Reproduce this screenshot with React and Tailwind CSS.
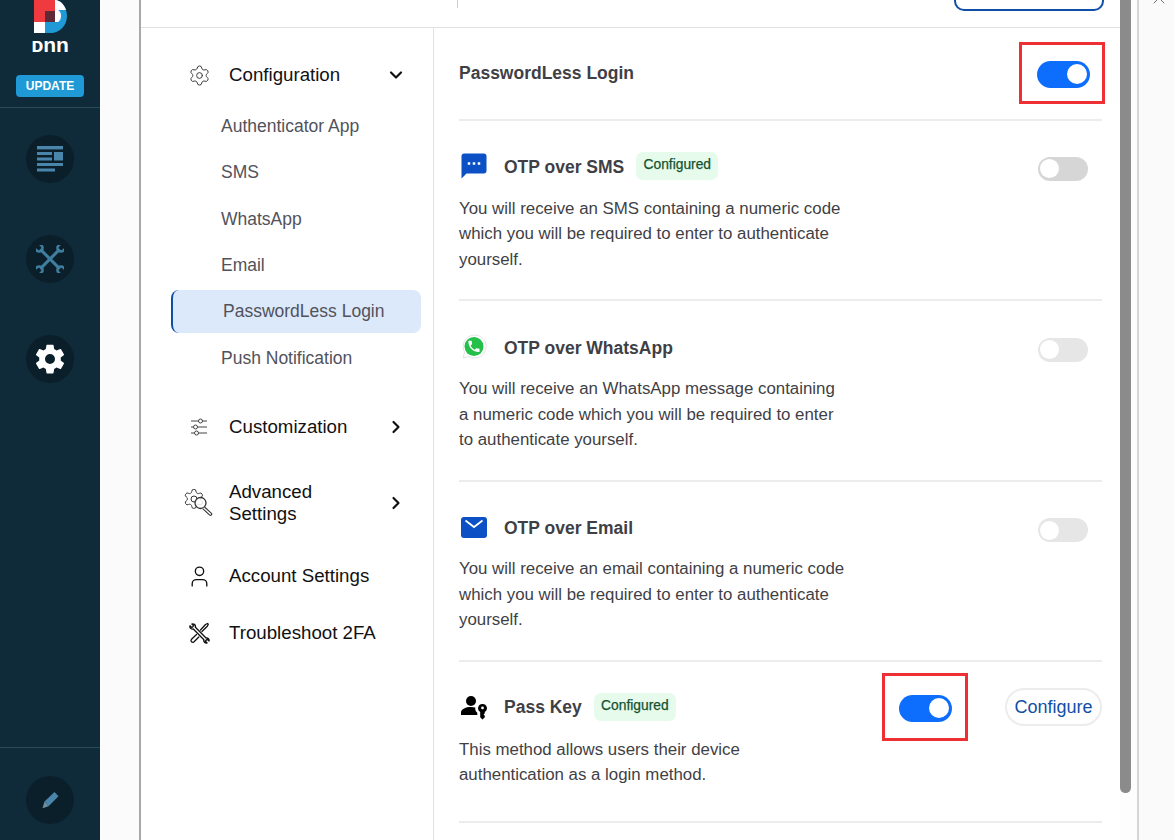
import React from "react";
import { Settings, User, ChevronDown, ChevronRight, X } from "lucide-react";
import { MdSms } from "react-icons/md";
import { IoSettingsSharp } from "react-icons/io5";

const GEAR = "M12.22 2h-.44a2 2 0 0 0-2 2v.18a2 2 0 0 1-1 1.73l-.43.25a2 2 0 0 1-2 0l-.15-.08a2 2 0 0 0-2.73.73l-.22.38a2 2 0 0 0 .73 2.73l.15.1a2 2 0 0 1 1 1.72v.51a2 2 0 0 1-1 1.74l-.15.09a2 2 0 0 0-.73 2.73l.22.38a2 2 0 0 0 2.73.73l.15-.08a2 2 0 0 1 2 0l.43.25a2 2 0 0 1 1 1.73V20a2 2 0 0 0 2 2h.44a2 2 0 0 0 2-2v-.18a2 2 0 0 1 1-1.73l.43-.25a2 2 0 0 1 2 0l.15.08a2 2 0 0 0 2.73-.73l.22-.39a2 2 0 0 0-.73-2.73l-.15-.08a2 2 0 0 1-1-1.74v-.5a2 2 0 0 1 1-1.74l.15-.09a2 2 0 0 0 .73-2.73l-.22-.38a2 2 0 0 0-2.73-.73l-.15.08a2 2 0 0 1-2 0l-.43-.25a2 2 0 0 1-1-1.73V4a2 2 0 0 0-2-2z";

function Logo() {
  const d = "M21 0h1C28 1 33 8 33 16 33 26 25 33 17 33H11V22h10V0z";
  return (
    <svg width="33" height="33" viewBox="0 0 33 33" className="block">
      <defs>
        <clipPath id="logoTop"><rect x="0" y="0" width="33" height="10" /></clipPath>
      </defs>
      <path d={d} fill="#1f9ad6" />
      <path d={d} fill="#ffffff" clipPath="url(#logoTop)" />
      <path d="M21 10h3c2 1 3 3 3 6 0 2-1 5-3 6h-3z" fill="#ffffff" />
      <rect x="0" y="0" width="21" height="22" fill="#ef3b3f" />
      <rect x="11" y="11" width="10" height="11" fill="#5f2a35" />
      <rect x="0" y="22" width="11" height="11" fill="#ffffff" />
    </svg>
  );
}

function DocIcon() {
  return (
    <svg width="28" height="28" viewBox="0 0 28 28" fill="#4a86ab">
      <rect x="1" y="1" width="26" height="3.4" />
      <rect x="1" y="7" width="15" height="3" />
      <rect x="1" y="12.5" width="15" height="3" />
      <rect x="18" y="7" width="9" height="8.5" />
      <rect x="1" y="18" width="26" height="3" />
      <rect x="1" y="23.5" width="18" height="3" />
    </svg>
  );
}

function Wrench({ angle }) {
  return (
    <g transform={`rotate(${angle} 14 14)`}>
      <path d="M14 1.500V26.500" strokeWidth="3" />
      <path d="M10.500-5v3.500a3.500 3.500 0 0 0 7 0V-5" strokeWidth="2.600" />
      <path d="M10.500 33v-3.500a3.500 3.500 0 0 1 7 0V33" strokeWidth="2.600" />
    </g>
  );
}

function Tools() {
  return (
    <svg width="28" height="28" viewBox="0 0 28 28" fill="none" stroke="#3f7e9e" strokeLinecap="round">
      <Wrench angle={45} />
      <Wrench angle={-45} />
    </svg>
  );
}

function Pencil() {
  return (
    <svg width="24" height="24" viewBox="0 0 24 24">
      <path d="M6.500 13.500 16.500 4l4 4.200-10 10z" fill="#4a86ab" />
      <path d="M6.500 13.500 10.500 18.200 4.500 20.200z" fill="#6f8ea0" />
    </svg>
  );
}

function SliderIcon() {
  return (
    <svg width="18" height="18" viewBox="0 0 18 18" fill="none" stroke="#444" strokeWidth="1">
      <path d="M1 3h16M1 9h16M1 15h16" />
      <circle cx="10.500" cy="3" r="2" fill="#fff" />
      <circle cx="5.500" cy="9" r="2" fill="#fff" />
      <circle cx="6.500" cy="15" r="2" fill="#fff" />
    </svg>
  );
}

function TroubleIcon() {
  return (
    <svg width="22" height="22" viewBox="0 0 22 22" fill="none" stroke="#111" strokeWidth="1.300" strokeLinejoin="round" strokeLinecap="round">
      <path d="M2 3.800 3.900 5.600 5.700 3.900 3.900 2c2-.7 4 1 3.500 3.200L18 16c1.800-.6 3.600 1.200 3 3l-1.900-1.700-1.800 1.700 1.800 1.900c-2 .6-3.800-1.200-3.200-3.100L5.300 7C3.300 7.600 1.400 5.800 2 3.800z" />
      <path d="m12.500 8 5-5.500 2-1 .8.8-1 2-5.300 5.200" />
      <path d="M8.500 12.500 3.300 17.500a1.800 1.800 0 0 0 2.500 2.500l5-5" />
    </svg>
  );
}

function AdvancedIcon() {
  return (
    <svg width="30" height="28" viewBox="0 0 30 28" fill="none" strokeLinejoin="round">
      <g transform="translate(-1.500 -1.500) scale(0.95)" stroke="#333" strokeWidth="1.050">
        <path d={GEAR} />
      </g>
      <circle cx="10" cy="10" r="3" stroke="#333" strokeWidth="1" />
      <circle cx="16.500" cy="14" r="5.500" stroke="#333" strokeWidth="1.300" fill="#fff" fillOpacity="0.85" />
      <path d="m20.500 18 7 6.300a1.300 1.300 0 0 1-1.800 1.800l-7-6.400" stroke="#333" strokeWidth="1.100" fill="#fff" />
    </svg>
  );
}

function WhatsAppIcon() {
  return (
    <svg width="26" height="26" viewBox="0 0 26 26">
      <path d="M2 24l1.600-6A11.500 11.500 0 1 1 8 22.500z" fill="#fff" stroke="#e4e4e4" strokeWidth="1" />
      <circle cx="13" cy="12.500" r="9.500" fill="#25c04a" />
      <g transform="translate(5.500 5) scale(0.62)">
        <path fill="#fff" d="M6.620 10.790c1.440 2.830 3.760 5.140 6.590 6.590l2.200-2.200c.27-.27.67-.36 1.020-.24 1.120.37 2.330.57 3.570.57.550 0 1 .45 1 1V20c0 .55-.45 1-1 1-9.390 0-17-7.610-17-17 0-.55.45-1 1-1h3.500c.55 0 1 .45 1 1 0 1.250.2 2.450.57 3.570.11.35.03.74-.25 1.020l-2.200 2.200z" />
      </g>
    </svg>
  );
}

function MailIcon() {
  return (
    <svg width="26" height="21" viewBox="0 0 26 21">
      <rect x="0" y="0" width="26" height="21" rx="3" fill="#0b50c5" />
      <path d="M4.500 3.500 13 10 21.500 3.500" fill="none" stroke="#fff" strokeWidth="1.800" />
    </svg>
  );
}

function PassKeyIcon() {
  return (
    <svg width="26" height="25" viewBox="0 0 26 25" fill="#000">
      <circle cx="10" cy="6" r="5" />
      <path d="M0 20v-2.500c0-3.500 5-5.500 10-5.500 1.600 0 3 .2 4.300.6-.3 2 .4 4 2 5.200V20z" />
      <path d="M21.500 9a4.300 4.300 0 0 0-2.300 8v5.200l2.300 2.300 2.300-2.300v-1.500l-1.200-1.200 1.200-1.200V17a4.300 4.300 0 0 0-2.300-8zm0 2.500a1.400 1.400 0 1 1 0 2.800 1.400 1.400 0 0 1 0-2.800z" fillRule="evenodd" />
    </svg>
  );
}

function SideButton({ children }) {
  return (
    <div className="w-[48px] h-[48px] rounded-full bg-[#0b1f2b] flex items-center justify-center">{children}</div>
  );
}

function Toggle({ on, faint }) {
  if (on) {
    return (
      <div className="w-[53px] h-[27px] rounded-full bg-[#0d6efd] flex items-center justify-end pr-[3px]">
        <div className="w-[20px] h-[20px] rounded-full bg-white" />
      </div>
    );
  }
  return (
    <div className={`w-[50px] h-[24px] rounded-full flex items-center pl-[2px] ${faint ? "bg-[#e6e6e6]" : "bg-[#d6d6d6]"}`}>
      <div className="w-[19px] h-[19px] rounded-full bg-white" />
    </div>
  );
}

function Badge() {
  return (
    <span className="h-[28px] w-[82px] rounded-[7px] bg-[#e6fbec] text-[#14532d] text-[13.8px] flex items-center justify-center pb-[1px] [-webkit-text-stroke:0.25px_#14532d]">
      Configured
    </span>
  );
}

function Heading({ children, className }) {
  return <h3 className={`text-[17.5px] font-bold text-[#3f3f46] leading-none ${className}`}>{children}</h3>;
}

function Method({ icon, title, badge, faint, children, className, toggleOffset, descOffset }) {
  return (
    <section className={`border-b-2 border-[#ececec] ${className}`}>
      <div className="flex items-center justify-between h-[28px]">
        <div className="flex items-center">
          <div className="w-[30px] h-[28px] flex items-center justify-center">{icon}</div>
          <div className="ml-[15px]"><Heading className="pt-[4px]">{title}</Heading></div>
          {badge && <div className="ml-[12px]"><Badge /></div>}
        </div>
        <div className={`mr-[14px] ${toggleOffset}`}><Toggle faint={faint} /></div>
      </div>
      <p className={`${descOffset} max-w-[388px] text-[16.85px] leading-[25.5px] text-[#3f3f46]`}>{children}</p>
    </section>
  );
}

function SubItem({ children, active }) {
  if (active) {
    return (
      <div className="h-[43px] rounded-lg bg-[#dbe9fb] border-l-2 border-[#0f4fa8] pl-[50px] flex items-center text-[17.5px] text-[#52525b]">
        {children}
      </div>
    );
  }
  return <div className="h-[43px] pl-[50px] flex items-center text-[17.5px] text-[#52525b]">{children}</div>;
}

function NavRow({ icon, children, chevron, className }) {
  return (
    <div className={`flex items-center pr-[15px] ${className}`}>
      <div className="w-[56px] flex items-center justify-center shrink-0">{icon}</div>
      <div className="ml-[2px] flex-1 text-[18.7px] leading-[22px] text-[#111]">{children}</div>
      {chevron === "down" && <ChevronDown size={20} strokeWidth={2.6} className="text-[#111]" />}
      {chevron === "right" && <ChevronRight size={20} strokeWidth={2.6} className="text-[#111]" />}
    </div>
  );
}

export default function App() {
  return (
    <div className="relative flex w-[1174px] h-[840px] overflow-hidden bg-white font-['Liberation_Sans',Arial,sans-serif]">
      <aside className="w-[100px] shrink-0 bg-[#0f2b3a] flex flex-col">
        <div className="h-[108px] border-b border-[#2a4a58] flex flex-col items-center shrink-0">
          <Logo />
          <div className="-mt-[1px] h-[24px] w-[37px] flex items-center justify-center font-['Liberation_Sans','DejaVu_Sans',sans-serif] text-white font-bold text-[21px] leading-none">ᴅnn</div>
          <div className="mt-[19px] w-[68px] h-[22px] rounded-[4px] bg-[#1f9ad6] text-white text-[12px] font-bold flex items-center justify-center">UPDATE</div>
        </div>
        <div className="flex flex-col items-center gap-[52px] pt-[27px]">
          <SideButton><DocIcon /></SideButton>
          <SideButton><Tools /></SideButton>
          <SideButton><IoSettingsSharp size={32} className="text-white" /></SideButton>
        </div>
        <div className="mt-auto h-[93px] border-t border-[#2a4a58] flex justify-center pt-[28px]">
          <SideButton><Pencil /></SideButton>
        </div>
      </aside>

      <div className="w-[39px] shrink-0 bg-[#fbfbfb]" />

      <div className="w-[981px] shrink-0 border-l-2 border-[#a8a8a8] flex flex-col">
        <header className="h-[28px] shrink-0 border-b border-[#e2e2e2] flex items-start">
          <div className="ml-[316px] w-[1px] h-[8px] bg-[#cfcfcf]" />
          <div className="ml-[496px] w-[150px] h-[11px] rounded-b-[10px] border-2 border-t-0 border-[#0f4fa8]" />
        </header>

        <div className="flex flex-1 min-h-0">
          <nav className="w-[293px] shrink-0 border-r border-[#e2e2e2] pl-[30px] pr-[12px] pt-[23px]">
            <NavRow className="h-[48px]" chevron="down" icon={<Settings size={23} strokeWidth={1} className="text-[#333]" />}>Configuration</NavRow>
            <div className="flex flex-col gap-[3.33px] mt-[5.5px]">
              <SubItem>Authenticator App</SubItem>
              <SubItem>SMS</SubItem>
              <SubItem>WhatsApp</SubItem>
              <SubItem>Email</SubItem>
              <SubItem active>PasswordLess Login</SubItem>
              <SubItem>Push Notification</SubItem>
            </div>
            <NavRow className="h-[48px] mt-[24px]" chevron="right" icon={<SliderIcon />}>Customization</NavRow>
            <NavRow className="h-[60px] mt-[22px]" chevron="right" icon={<AdvancedIcon />}>Advanced<br />Settings</NavRow>
            <NavRow className="h-[48px] mt-[19px]" icon={<User size={25} strokeWidth={1.3} className="text-[#111]" />}>Account Settings</NavRow>
            <NavRow className="h-[48px] mt-[9px]" icon={<TroubleIcon />}>Troubleshoot 2FA</NavRow>
          </nav>

          <main className="flex-1 min-w-0 pl-[25px] pr-[18px]">
            <div className="flex items-center justify-between h-[93px] pt-[14px] pb-[16px] border-b-2 border-[#ececec]">
              <Heading className="pt-[2px]">PasswordLess Login</Heading>
              <div className="w-[86px] h-[62px] -mr-[3px] border-[3px] border-[#ee2f33] flex items-center justify-center pt-[3px] pl-[2px]"><Toggle on /></div>
            </div>

            <Method className="h-[180px] pt-[31px]" badge descOffset="mt-[15.5px]" toggleOffset="mt-[5px]" title="OTP over SMS" icon={<MdSms size={32} className="text-[#0b50c5]" />}>
              You will receive an SMS containing a numeric code which you will be required to enter to authenticate yourself.
            </Method>
            <Method className="h-[181px] pt-[32px]" faint descOffset="mt-[15px]" toggleOffset="mt-[5px]" title="OTP over WhatsApp" icon={<WhatsAppIcon />}>
              You will receive an WhatsApp message containing a numeric code which you will be required to enter to authenticate yourself.
            </Method>
            <Method className="h-[180px] pt-[31px]" faint descOffset="mt-[15px]" toggleOffset="mt-[6px]" title="OTP over Email" icon={<MailIcon />}>
              You will receive an email containing a numeric code which you will be required to enter to authenticate yourself.
            </Method>

            <section className="h-[161px] pt-[11px] border-b-2 border-[#ececec]">
              <div className="flex items-center justify-between h-[68px]">
                <div className="flex items-center">
                  <div className="w-[30px] flex items-center justify-center"><PassKeyIcon /></div>
                  <div className="ml-[15px]"><Heading className="pt-[2px]">Pass Key</Heading></div>
                  <div className="ml-[12px]"><Badge /></div>
                </div>
                <div className="flex items-center">
                  <div className="w-[86px] h-[68px] border-[3px] border-[#ee2f33] flex items-center justify-center pt-[2px]"><Toggle on /></div>
                  <button className="ml-[37px] w-[97px] h-[38px] rounded-full border-2 border-[#ececec] text-[18px] text-[#0f4fa8] flex items-center justify-center">Configure</button>
                </div>
              </div>
              <p className="-mt-[4.5px] max-w-[300px] text-[16.85px] leading-[25.5px] text-[#3f3f46]">
                This method allows users their device authentication as a login method.
              </p>
            </section>
          </main>
        </div>
      </div>

      <div className="w-[17px] shrink-0 bg-[#fdfdfd]">
        <div className="w-[11px] h-[793px] rounded-b-[6px] bg-[#8b8b8b]" />
      </div>
      <div className="w-[2px] shrink-0 bg-[#d6d6d6]" />
      <div className="flex-1 bg-[#fafafa]" />
      <X size={20} strokeWidth={1} className="absolute right-[5px] top-[-12px] text-[#555]" />
    </div>
  );
}
